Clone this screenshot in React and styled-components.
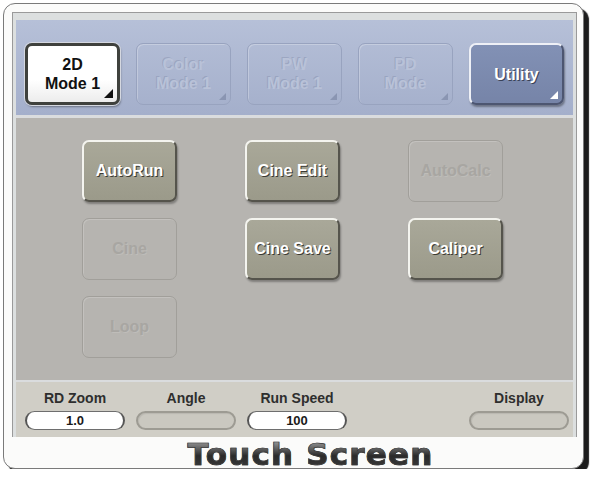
import React from "react";
import styled, { createGlobalStyle, css } from "styled-components";

const Global = createGlobalStyle`
  html, body { margin: 0; padding: 0; background: #ffffff; }
  body { font-family: "Liberation Sans", Arial, sans-serif; }
`;

const Frame = styled.div`
  box-sizing: border-box;
  margin: 3px 0 0 3px;
  width: 581px;
  height: 466px;
  border: 1px solid #7a7a7a;
  border-radius: 12px;
  background: #fbfbfa;
  box-shadow: 5px 5px 1px #1c1c1c;
  padding: 8px 0 0 8px;
  display: flex;
  flex-direction: column;
`;

const Panel = styled.div`
  box-sizing: border-box;
  width: 565px;
  height: 426px;
  border: 1px solid #9a9a9a;
  border-bottom: none;
  background: #dcdfdf;
  padding: 7px 3px 0 3px;
  display: flex;
  flex-direction: column;
`;

const ModeBar = styled.div`
  height: 95px;
  box-sizing: border-box;
  background: linear-gradient(#b6c0d8, #a4afcb);
  padding: 23px 0 0 9px;
  display: flex;
  gap: 16px;
  align-items: flex-start;
`;

const Divider = styled.div`
  height: ${(p) => p.$h}px;
  background: #dadcde;
`;

const Corner = css`
  &::after {
    content: "";
    position: absolute;
    right: 4px;
    bottom: 4px;
    width: 0;
    height: 0;
    border-left: ${(p) => p.$size}px solid transparent;
    border-bottom: ${(p) => p.$size}px solid ${(p) => p.$mark};
  }
`;

const modeVariants = {
  on: css`
    background: linear-gradient(#ffffff 60%, #ececec);
    border: 3px solid #3f413d;
    box-shadow: 0 0 0 1px #d5d8e0, 1px 2px 2px rgba(0, 0, 0, 0.35);
    color: #111;
  `,
  off: css`
    background: transparent;
    border: 1px solid #98a3bf;
    box-shadow: inset 1px 1px 0 rgba(255, 255, 255, 0.25);
    color: #b9c2d8;
    text-shadow: -1px -1px 0 rgba(120, 130, 160, 0.35);
  `,
  lit: css`
    background: linear-gradient(#8291b5, #7684a8);
    border: 2px solid;
    border-color: #eef0f6 #4d5671 #4d5671 #eef0f6;
    box-shadow: 1px 2px 2px rgba(0, 0, 0, 0.35);
    color: #ffffff;
    text-shadow: 1px 1px 0 #3a4257;
  `,
};

const ModeButton = styled.div`
  position: relative;
  box-sizing: border-box;
  width: 95px;
  height: 62px;
  border-radius: 7px;
  display: flex;
  align-items: center;
  justify-content: center;
  text-align: center;
  font-weight: bold;
  font-size: 16px;
  line-height: 19px;
  white-space: pre-line;
  ${(p) => modeVariants[p.$kind]}
  ${Corner}
`;

const Body = styled.div`
  height: 262px;
  box-sizing: border-box;
  background: #b6b4b0;
  padding: 22px 0 0 66px;
  display: grid;
  grid-template-columns: repeat(3, 95px);
  grid-auto-rows: 62px;
  column-gap: 68px;
  row-gap: 16px;
  align-content: start;
`;

const Key = styled.div`
  box-sizing: border-box;
  border-radius: 7px;
  display: flex;
  align-items: center;
  justify-content: center;
  font-size: 16px;
  font-weight: bold;
  grid-column: ${(p) => p.$col};
  grid-row: ${(p) => p.$row};
  ${(p) =>
    p.$active
      ? css`
          background: linear-gradient(#a9a899, #9b9a8a);
          border: 2px solid;
          border-color: #f4f4ef #55544c #55544c #f4f4ef;
          box-shadow: 1px 2px 2px rgba(0, 0, 0, 0.3);
          color: #ffffff;
          text-shadow: 1px 1px 0 #3b3a33;
        `
      : css`
          background: transparent;
          border: 1px solid #a19f9a;
          box-shadow: inset 1px 1px 0 rgba(255, 255, 255, 0.18);
          color: #a8a6a2;
          text-shadow: 1px 1px 0 rgba(255, 255, 255, 0.12);
        `}
`;

const Controls = styled.div`
  flex: 1;
  background: #d0cec6;
  padding: 8px 0 0 9px;
  display: grid;
  grid-template-columns: repeat(5, 100px);
  column-gap: 11px;
`;

const Field = styled.div`
  grid-column: ${(p) => p.$col};
  display: flex;
  flex-direction: column;
  align-items: center;
  gap: 5px;
`;

const FieldLabel = styled.div`
  font-size: 14px;
  font-weight: bold;
  color: #2e2e2e;
  line-height: 16px;
`;

const ValueBox = styled.div`
  box-sizing: border-box;
  width: 100px;
  height: 19px;
  border-radius: 10px;
  font-size: 13px;
  font-weight: bold;
  color: #1a1a1a;
  display: flex;
  align-items: center;
  justify-content: center;
  ${(p) =>
    p.$empty
      ? css`
          background: #cac8c0;
          border: 2px solid #9d9b93;
          box-shadow: inset 1px 1px 1px rgba(0, 0, 0, 0.08);
        `
      : css`
          background: #ffffff;
          border: 1px solid #6e6e6e;
          border-left: 2px solid #555;
          border-right: 2px solid #555;
        `}
`;

const Caption = styled.div`
  height: 31px;
  width: 565px;
  display: flex;
  align-items: center;
  justify-content: center;
  padding: 4px 0 0 32px;
  box-sizing: border-box;
`;

const CaptionText = styled.span`
  font-family: "DejaVu Sans", "Liberation Sans", sans-serif;
  font-weight: bold;
  font-size: 31px;
  letter-spacing: 1.2px;
  line-height: 27px;
  background: linear-gradient(#9a9a9a, #2a2a2a 55%, #3a3a3a);
  -webkit-background-clip: text;
  background-clip: text;
  color: transparent;
  -webkit-text-stroke: 0.7px #3a3a3a;
`;

const modes = [
  { label: "2D\nMode 1", kind: "on", mark: "#111", size: 9 },
  { label: "Color\nMode 1", kind: "off", mark: "#8a95b2", size: 7 },
  { label: "PW\nMode 1", kind: "off", mark: "#8a95b2", size: 7 },
  { label: "PD\nMode", kind: "off", mark: "#8a95b2", size: 7 },
  { label: "Utility", kind: "lit", mark: "#ffffff", size: 8 },
];

const keys = [
  { label: "AutoRun", col: 1, row: 1, active: true },
  { label: "Cine Edit", col: 2, row: 1, active: true },
  { label: "AutoCalc", col: 3, row: 1, active: false },
  { label: "Cine", col: 1, row: 2, active: false },
  { label: "Cine Save", col: 2, row: 2, active: true },
  { label: "Caliper", col: 3, row: 2, active: true },
  { label: "Loop", col: 1, row: 3, active: false },
];

const fields = [
  { label: "RD Zoom", value: "1.0", col: 1 },
  { label: "Angle", value: "", col: 2 },
  { label: "Run Speed", value: "100", col: 3 },
  { label: "Display", value: "", col: 5 },
];

export default function App() {
  return (
    <>
      <Global />
      <Frame>
        <Panel>
          <ModeBar>
            {modes.map((m) => (
              <ModeButton key={m.label} $kind={m.kind} $mark={m.mark} $size={m.size}>
                {m.label}
              </ModeButton>
            ))}
          </ModeBar>
          <Divider $h={3} />
          <Body>
            {keys.map((k) => (
              <Key key={k.label} $col={k.col} $row={k.row} $active={k.active}>
                {k.label}
              </Key>
            ))}
          </Body>
          <Divider $h={2} />
          <Controls>
            {fields.map((f) => (
              <Field key={f.label} $col={f.col}>
                <FieldLabel>{f.label}</FieldLabel>
                <ValueBox $empty={!f.value}>{f.value}</ValueBox>
              </Field>
            ))}
          </Controls>
        </Panel>
        <Caption>
          <CaptionText>Touch Screen</CaptionText>
        </Caption>
      </Frame>
    </>
  );
}
